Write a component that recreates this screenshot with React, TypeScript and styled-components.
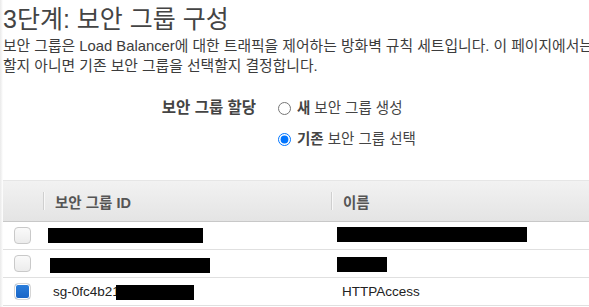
import styled, { createGlobalStyle } from "styled-components";

const GlobalStyle = createGlobalStyle`
    html, body {
        margin: 0;
        padding: 0;
        background: #fff;
        overflow: hidden;
    }
    body {
        font-family: "Liberation Sans", "Noto Sans CJK KR", sans-serif;
        color: #444;
    }
`;

type Row = {
    checked: boolean;
    idText?: string;
    idRedact: { left: number; width: number; top: number };
    nameText?: string;
    nameRedact?: { left: number; width: number; top: number };
};

const rows: Row[] = [
    { checked: false, idRedact: { left: -5, width: 155, top: 0 }, nameRedact: { left: -5, width: 190, top: -1 } },
    { checked: false, idRedact: { left: -3, width: 160, top: 2 }, nameRedact: { left: -5, width: 50, top: 1 } },
    { checked: true, idText: "sg-0fc4b21", idRedact: { left: -4, width: 78, top: 1 }, nameText: "HTTPAccess" },
];

export default function App() {
    return (
        <Page>
            <GlobalStyle />
            <Title>3단계: 보안 그룹 구성</Title>
            <Description>
                보안 그룹은 Load Balancer에 대한 트래픽을 제어하는 방화벽 규칙 세트입니다. 이 페이지에서는
                <br />
                할지 아니면 기존 보안 그룹을 선택할지 결정합니다.
            </Description>

            <AssignForm>
                <FieldLabel>보안 그룹 할당</FieldLabel>
                <RadioGroup>
                    <RadioOption>
                        <Radio type="radio" name="sg" />
                        <span><b>새</b> 보안 그룹 생성</span>
                    </RadioOption>
                    <RadioOption>
                        <Radio type="radio" name="sg" defaultChecked />
                        <span><b>기존</b> 보안 그룹 선택</span>
                    </RadioOption>
                </RadioGroup>
            </AssignForm>

            <Table>
                <HeaderRow>
                    <CheckCell />
                    <HeadCell>보안 그룹 ID</HeadCell>
                    <HeadCell>이름</HeadCell>
                </HeaderRow>
                {rows.map((row, i) => (
                    <BodyRow key={i}>
                        <CheckCell>
                            <Checkbox checked={row.checked} />
                        </CheckCell>
                        <IdCell>
                            {row.idText}
                            <Redact
                                style={{ marginLeft: row.idRedact.left, width: row.idRedact.width, top: row.idRedact.top }}
                            />
                        </IdCell>
                        <NameCell>
                            {row.nameText}
                            {row.nameRedact && (
                                <Redact
                                    style={{ marginLeft: row.nameRedact.left, width: row.nameRedact.width, top: row.nameRedact.top }}
                                />
                            )}
                        </NameCell>
                    </BodyRow>
                ))}
            </Table>
        </Page>
    );
}

const Page = styled.div`
    width: 589px;
    height: 307px;
    padding-left: 3px;
    box-sizing: border-box;
    background: linear-gradient(to right, #e9e9e9 0px, #f7f7f7 2px, #fff 3px);
    overflow: hidden;
`;

const Title = styled.h1`
    margin: 0;
    padding-top: 3px;
    font-size: 25px;
    font-weight: normal;
    line-height: 32px;
    color: #444;
    white-space: nowrap;
`;

const Description = styled.p`
    margin: 1px 0 0;
    font-size: 14.8px;
    line-height: 20px;
    color: #3c3c3c;
    white-space: nowrap;
`;

const AssignForm = styled.div`
    display: grid;
    grid-template-columns: 253px auto;
    column-gap: 22px;
    margin-top: 20px;
`;

const FieldLabel = styled.div`
    text-align: right;
    font-size: 15.5px;
    font-weight: bold;
    line-height: 24px;
    color: #444;
`;

const RadioGroup = styled.div`
    display: flex;
    flex-direction: column;
    gap: 7px;
`;

const RadioOption = styled.label`
    display: flex;
    align-items: center;
    gap: 6px;
    font-size: 14.5px;
    line-height: 24px;
    color: #444;
    b {
        font-weight: bold;
    }
`;

const Radio = styled.input`
    width: 13px;
    height: 13px;
    margin: 0;
    accent-color: #0075ff;
`;

const Table = styled.div`
    margin-top: 29px;
    display: flex;
    flex-direction: column;
`;

const HeaderRow = styled.div`
    display: grid;
    grid-template-columns: 40px 288px 1fr;
    height: 40px;
    align-items: center;
    background: linear-gradient(to bottom, #f2f2f2, #e4e4e4);
    border-top: 1px solid #e6e6e6;
    border-bottom: 1px solid #c8c8c8;
`;

const HeadCell = styled.div`
    display: flex;
    align-items: center;
    height: 18px;
    padding-left: 11px;
    border-left: 1px solid #cfcfcf;
    box-shadow: inset 1px 0 0 #f8f8f8;
    font-size: 14.5px;
    font-weight: bold;
    color: #555;
    white-space: nowrap;
`;

const BodyRow = styled.div`
    display: grid;
    grid-template-columns: 40px 288px 1fr;
    height: 27px;
    align-items: center;
    border-bottom: 1px solid #e0e0e0;
`;

const CheckCell = styled.div`
    display: flex;
    align-items: center;
    padding-left: 11px;
`;

const Checkbox = styled.span<{ checked: boolean }>`
    display: inline-block;
    width: 15px;
    height: 15px;
    border-radius: 4px;
    border: 1px solid ${(p) => (p.checked ? "#d5d5d5" : "#c9c9c9")};
    background: ${(p) =>
        p.checked
            ? "linear-gradient(to bottom, #2b7fdc, #1763c6)"
            : "linear-gradient(to bottom, #fafafa, #ececec)"};
    box-shadow: ${(p) => (p.checked ? "inset 0 0 0 1px #fff" : "none")};
`;

const IdCell = styled.div`
    display: flex;
    align-items: center;
    padding-left: 10px;
    font-size: 13.5px;
    color: #222;
    white-space: nowrap;
`;

const NameCell = styled.div`
    display: flex;
    align-items: center;
    padding-left: 11px;
    font-size: 13.5px;
    color: #222;
    white-space: nowrap;
`;

const Redact = styled.span`
    position: relative;
    display: inline-block;
    height: 15px;
    background: #000;
`;
